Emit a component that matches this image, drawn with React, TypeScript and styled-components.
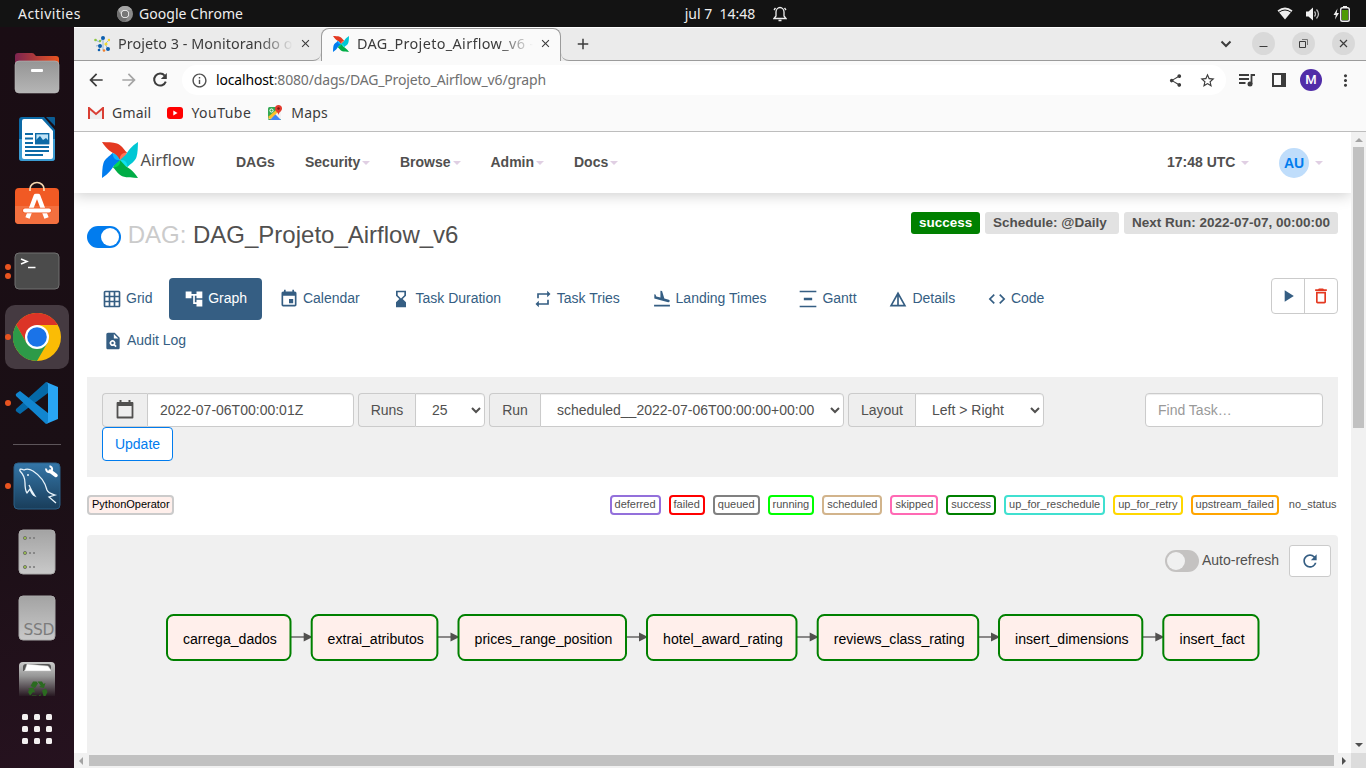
import React from 'react';
import styled, { createGlobalStyle, css } from 'styled-components';
import {
  MdGridOn, MdAccountTree, MdEvent, MdHourglassBottom, MdRepeat, MdFlightLand,
  MdVerticalDistribute, MdDetails, MdCode, MdPlagiarism,
  MdPlayArrow, MdDeleteOutline, MdRefresh, MdShare, MdStarBorder, MdArrowBack,
  MdArrowForward, MdInfoOutline, MdMoreVert, MdClose, MdAdd,
} from 'react-icons/md';

const Global = createGlobalStyle`
  * { box-sizing: border-box; }
  body { margin: 0; overflow: hidden; background: #fff; }
  svg { display: block; flex: none; }
`;

const ui = `'Noto Sans', 'Open Sans', sans-serif`;
const web = `'Liberation Sans', Arial, sans-serif`;

const Desktop = styled.div`
  width: 1366px;
  height: 768px;
  display: flex;
  flex-direction: column;
  overflow: hidden;
  font-family: ${ui};
`;

/* ---------- system bar ---------- */
const TopBar = styled.header`
  height: 27px;
  flex: none;
  display: grid;
  grid-template-columns: 1fr auto 1fr;
  align-items: center;
  background: #131313;
  color: #eee;
  font-size: 14px;
`;
const TopLeft = styled.div`
  display: flex;
  align-items: center;
  padding-left: 18px;
`;
const TopCenter = styled.div`
  display: flex;
  align-items: center;
  gap: 18px;
  margin-left: 106px;
`;
const TopRight = styled.div`
  display: flex;
  align-items: center;
  justify-content: flex-end;
  gap: 12px;
  padding-right: 16px;
`;
const Label = styled.span<{ $w?: number; $ls?: number }>`
  flex: none;
  white-space: pre;
  width: ${p => (p.$w ? `${p.$w}px` : 'auto')};
  letter-spacing: ${p => p.$ls ?? 0}px;
`;
const AppMenu = styled.div`
  display: flex;
  align-items: center;
  gap: 6px;
  margin-left: 36px;
`;

/* ---------- dock ---------- */
const Body = styled.div`
  flex: 1;
  display: flex;
  min-height: 0;
`;
const Dock = styled.nav`
  width: 74px;
  flex: none;
  display: flex;
  flex-direction: column;
  align-items: center;
  padding-top: 13px;
  background: linear-gradient(165deg, #1a0d14 0%, #1a0f15 60%, #26121f 100%);
`;
const DockCell = styled.div<{ $clip?: boolean }>`
  width: 74px;
  height: ${p => (p.$clip ? 45 : 66)}px;
  flex: none;
  display: grid;
  grid-template-columns: 5px 6px 1fr 11px;
  align-items: ${p => (p.$clip ? 'start' : 'center')};
  overflow: hidden;
  padding-top: ${p => (p.$clip ? 10 : 0)}px;
`;
const Dots = styled.div`
  grid-column: 2;
  display: flex;
  flex-direction: column;
  gap: 3px;
`;
const Dot = styled.i`
  width: 6px;
  height: 6px;
  border-radius: 50%;
  background: #e95420;
`;
const DockTile = styled.div<{ $active?: boolean }>`
  grid-column: 3;
  display: flex;
  justify-content: center;
  align-items: center;
  width: 64px;
  height: 64px;
  margin-left: -6px;
  border-radius: 10px;
  background: ${p => (p.$active ? '#453a41' : 'transparent')};
`;
const ActiveCell = styled(DockCell)`
  ${Dots} { z-index: 1; }
`;
const RaisedTile = styled(DockTile)`
  padding-bottom: 5px;
`;
const ClipTile = styled(DockTile)`
  height: 35px;
  align-items: flex-start;
`;
const DockRule = styled.hr`
  width: 48px;
  height: 1px;
  border: 0;
  margin: 8px 0;
  background: #5d555a;
  flex: none;
`;
const AppsGrid = styled.div`
  display: grid;
  grid-template-columns: repeat(3, 6px);
  grid-auto-rows: 6px;
  gap: 6px;
  margin-top: 18px;
`;
const AppsDot = styled.i`
  border-radius: 1.5px;
  background: #f3f0f0;
`;

/* ---------- browser chrome ---------- */
const Browser = styled.main`
  flex: 1;
  min-width: 0;
  display: flex;
  flex-direction: column;
  background: #fafafa;
  color: #3c3c3c;
`;
const TabStrip = styled.div`
  height: 34px;
  flex: none;
  display: flex;
  background: #ebebeb;
  border-top: 1px solid #fff;
`;
const Tab = styled.div<{ $active?: boolean }>`
  width: ${p => (p.$active ? 240 : 247)}px;
  display: flex;
  align-items: center;
  font-size: 14.4px;
  padding-bottom: 1px;
  ${p => p.$active
    ? css`
        background: #fafafa;
        border: 1px solid #9b9b9b;
        border-bottom: 0;
        border-radius: 8px 8px 0 0;
        padding-left: 11px;
        padding-bottom: 3px;
      `
    : css`
        border-bottom: 1px solid #9b9b9b;
        border-bottom-right-radius: 8px;
        padding-left: 20px;
      `}
`;
const TabTitle = styled.div<{ $w: number; $ls: number }>`
  width: ${p => p.$w}px;
  margin-left: 8px;
  white-space: pre;
  letter-spacing: ${p => p.$ls}px;
  mask-image: linear-gradient(90deg, #000 calc(100% - 34px), transparent);
`;
const TabClose = styled.span`
  display: flex;
  margin-left: 6px;
`;
const StripRest = styled.div`
  flex: 1;
  display: flex;
  align-items: center;
  justify-content: space-between;
  border-bottom: 1px solid #9b9b9b;
  border-bottom-left-radius: 8px;
  padding: 0 11px 1px 13px;
`;
const WindowButtons = styled.div`
  display: flex;
  align-items: center;
  gap: 17px;
`;
const RoundButton = styled.span`
  width: 23px;
  height: 23px;
  border-radius: 50%;
  background: #d9d9d9;
  display: flex;
  align-items: center;
  justify-content: center;
`;
const Toolbar = styled.div`
  height: 38px;
  flex: none;
  display: flex;
  align-items: center;
  padding: 0 12px;
  gap: 12px;
`;
const Omnibox = styled.div`
  width: 1044px;
  flex: none;
  height: 30px;
  margin-left: 2px;
  border-radius: 15px;
  background: #fff;
  display: flex;
  align-items: center;
  padding: 0 10px 0 9px;
  gap: 8px;
  font-size: 14px;
`;
const Url = styled.span`
  flex: 1;
  margin-top: -2px;
  color: #707070;
  letter-spacing: -0.16px;
`;
const UrlHost = styled.span`
  color: #000;
`;
const OmniActions = styled.span`
  display: flex;
  align-items: center;
  gap: 16px;
`;
const ToolActions = styled.div`
  display: flex;
  align-items: center;
  gap: 13.5px;
`;
const NavButtons = styled.div`
  display: flex;
  align-items: center;
  gap: 13px;
`;
const Profile = styled.span`
  width: 22px;
  height: 22px;
  border-radius: 50%;
  background: #512da8;
  color: #fff;
  font: 500 13px/22px Roboto, sans-serif;
  text-align: center;
`;
const Bookmarks = styled.div`
  height: 33px;
  flex: none;
  display: flex;
  align-items: flex-start;
  padding: 4px 0 0 14px;
  gap: 16px;
  font-size: 14px;
  line-height: 20px;
  border-bottom: 1px solid #bdbdbd;
`;
const Bookmark = styled.span`
  display: flex;
  align-items: center;
  gap: 8px;
`;

/* ---------- page viewport ---------- */
const Viewport = styled.div`
  flex: 1;
  min-height: 0;
  display: grid;
  grid-template-columns: 1fr 15px;
  grid-template-rows: 1fr 15px;
`;
const Page = styled.div`
  overflow: hidden;
  background: #fff;
  font-family: ${web};
  font-size: 14px;
  line-height: 20px;
  color: #51504f;
`;
const VScroll = styled.div`
  background: #f1f1f1;
  display: flex;
  flex-direction: column;
  align-items: center;
  padding-top: 6px;
`;
const VThumb = styled.div`
  width: 11px;
  height: 281px;
  margin: 5px 0 auto;
  background: #c1c1c1;
`;
const HScroll = styled.div`
  background: #f1f1f1;
  display: flex;
  align-items: center;
  padding: 0 5px;
`;
const HThumb = styled.div`
  flex: 1;
  height: 11px;
  margin: 0 8px 0 6px;
  background: #c1c1c1;
`;
const Corner = styled.div`
  background: #dcdcdc;
`;
const Arrow = styled.i<{ $dir: 'up' | 'down' | 'left' | 'right' }>`
  width: 0;
  height: 0;
  border: 4px solid transparent;
  ${p => p.$dir === 'up' && 'border-top: 0; border-bottom-color: #a3a3a3;'}
  ${p => p.$dir === 'down' && 'border-bottom: 0; border-top-color: #505050; margin-bottom: 6px;'}
  ${p => p.$dir === 'left' && 'border-left: 0; border-right-color: #a3a3a3;'}
  ${p => p.$dir === 'right' && 'border-right: 0; border-left-color: #505050;'}
`;

/* ---------- Airflow ---------- */
const NavBar = styled.div`
  height: 61px;
  display: flex;
  align-items: center;
  padding: 0 28px 0 28px;
  box-shadow: 0 2px 14px rgba(0, 0, 0, 0.2);
  font-weight: bold;
`;
const Brand = styled.div`
  width: 134px;
  display: flex;
  align-items: center;
  gap: 2.5px;
  font: 16.5px/20px 'Noto Sans', sans-serif;
  padding-bottom: 5px;
`;
const NavItem = styled.span<{ $w: number; $gap?: number }>`
  width: ${p => p.$w}px;
  display: flex;
  align-items: center;
  gap: ${p => p.$gap ?? 2}px;
  margin-top: -1px;
`;
const Caret = styled.i`
  border: 4px solid transparent;
  border-bottom: 0;
  border-top-color: #e0cfe3;
  margin-top: 2px;
`;
const Avatar = styled.span`
  width: 30px;
  height: 30px;
  border-radius: 50%;
  background: #bfddfb;
  color: #017cee;
  text-align: center;
  line-height: 31px;
  margin-top: 1px;
`;
const NavRight = styled.div`
  margin-left: auto;
  display: flex;
  align-items: center;
`;
const Content = styled.div`
  padding: 19px 13px 0;
`;
const TitleRow = styled.div`
  display: flex;
  justify-content: space-between;
  align-items: flex-start;
  height: 66px;
`;
const Title = styled.h3`
  display: flex;
  align-items: center;
  margin: 10px 0 0;
  font-size: 24px;
  font-weight: normal;
  line-height: 26px;
`;
const TitleMuted = styled.span`
  color: #cbcbcb;
  margin: 0 6.67px 0 6.67px;
`;
const Switch = styled.span<{ $on?: boolean }>`
  width: 34px;
  height: 22px;
  border-radius: 11px;
  padding: 2px;
  display: flex;
  justify-content: ${p => (p.$on ? 'flex-end' : 'flex-start')};
  background: ${p => (p.$on ? '#017cee' : '#c4c2c1')};
  margin-top: ${p => (p.$on ? 4 : 0)}px;
`;
const Knob = styled.i<{ $on?: boolean }>`
  width: 18px;
  height: 18px;
  border-radius: 50%;
  background: ${p => (p.$on ? '#fff' : '#f0f0f0')};
`;
const Badges = styled.div`
  display: flex;
  gap: 5px;
`;
const Badge = styled.span<{ $ok?: boolean; $w: number }>`
  width: ${p => p.$w}px;
  height: 22px;
  padding-left: 8px;
  border-radius: 3px;
  font-size: 13.5px;
  line-height: 22px;
  font-weight: bold;
  white-space: nowrap;
  background: ${p => (p.$ok ? '#008000' : '#e2e2e2')};
  color: ${p => (p.$ok ? '#fff' : '#51504f')};
`;
const TabsRow = styled.div`
  display: flex;
  justify-content: space-between;
  align-items: flex-start;
  margin-bottom: 15px;
`;
const Pills = styled.div`
  display: flex;
  flex-wrap: wrap;
  column-gap: 1.75px;
  width: 1030px;
`;
const Pill = styled.a<{ $active?: boolean; $indent?: number }>`
  height: 42px;
  display: flex;
  align-items: center;
  gap: 4px;
  padding: 0 15px;
  margin-left: ${p => p.$indent ?? 0}px;
  border-radius: 4px;
  color: ${p => (p.$active ? '#fff' : '#355e83')};
  background: ${p => (p.$active ? '#355e83' : 'transparent')};
`;
const PillText = styled.span`
  margin-top: -2px;
`;
const ButtonPair = styled.div`
  width: 67px;
  height: 36px;
  display: flex;
  border: 1px solid #cbcbcb;
  border-radius: 4px;
`;
const IconButton = styled.span<{ $danger?: boolean }>`
  flex: 1;
  display: flex;
  align-items: center;
  justify-content: center;
  color: ${p => (p.$danger ? '#e43921' : '#355e83')};
  & + & { border-left: 1px solid #cbcbcb; }
`;
const Filters = styled.div`
  height: 100px;
  padding: 16px 15px;
  background: #f0f0f0;
`;
const FilterRow = styled.div`
  display: flex;
  gap: 4px;
`;
const Group = styled.div<{ $w: number }>`
  width: ${p => p.$w}px;
  height: 34px;
  display: flex;
`;
const Addon = styled.span<{ $w: number }>`
  width: ${p => p.$w}px;
  flex: none;
  display: flex;
  align-items: center;
  justify-content: center;
  border: 1px solid #cbcbcb;
  border-right: 0;
  border-radius: 4px 0 0 4px;
  background: #eee;
`;
const control = css`
  height: 34px;
  min-width: 0;
  padding: 6px 12px;
  border: 1px solid #cbcbcb;
  background: #fff;
  color: #51504f;
  font: 14px/20px ${web};
  box-shadow: inset 0 1px 1px rgba(0, 0, 0, 0.075);
`;
const TextInput = styled.input<{ $alone?: boolean }>`
  ${control}
  flex: 1;
  border-radius: ${p => (p.$alone ? '4px' : '0 4px 4px 0')};
  &::placeholder { color: #999; }
`;
const Select = styled.select`
  ${control}
  flex: 1;
  border-radius: 0 4px 4px 0;
`;
const SearchGroup = styled(Group)`
  margin-left: auto;
`;
const UpdateButton = styled.button`
  display: block;
  width: 71px;
  height: 34px;
  padding: 0;
  border: 1px solid #017cee;
  border-radius: 4px;
  background: #fff;
  color: #017cee;
  font: 14px/20px ${web};
`;
const Legend = styled.div`
  display: flex;
  justify-content: space-between;
  margin: 18px 0 20px;
`;
const States = styled.div`
  display: flex;
  gap: 8px;
`;
const State = styled.span<{ $c?: string; $op?: boolean }>`
  height: 20px;
  padding: ${p => (p.$c ? (p.$op ? '0 2px 0 3px' : '0 3px') : '2px 1.5px 0 2px')};
  border: ${p => (p.$c ? `2px solid ${p.$c}` : '0')};
  border-radius: 4px;
  font-size: 11px;
  line-height: 15px;
  color: ${p => (p.$op ? '#000' : '#51504f')};
  background: ${p => (p.$op ? '#ffefeb' : '#fff')};
`;
const GraphBox = styled.section`
  height: 260px;
  border-radius: 4px;
  background: #f0f0f0;
`;
const GraphTools = styled.div`
  display: flex;
  justify-content: flex-end;
  align-items: center;
  padding: 10px 7px 0;
`;
const RefreshLabel = styled.span`
  margin: -2px 10px 0 3px;
`;
const RefreshButton = styled.span`
  width: 42px;
  height: 32px;
  display: flex;
  align-items: center;
  justify-content: center;
  border: 1px solid #cbcbcb;
  border-radius: 3px;
  background: #fff;
  color: #355e83;
`;

const pills = [
  { text: 'Grid', Icon: MdGridOn },
  { text: 'Graph', Icon: MdAccountTree, active: true },
  { text: 'Calendar', Icon: MdEvent },
  { text: 'Task Duration', Icon: MdHourglassBottom },
  { text: 'Task Tries', Icon: MdRepeat },
  { text: 'Landing Times', Icon: MdFlightLand },
  { text: 'Gantt', Icon: MdVerticalDistribute },
  { text: 'Details', Icon: MdDetails },
  { text: 'Code', Icon: MdCode },
  { text: 'Audit Log', Icon: MdPlagiarism, indent: 1 },
];

const states: [string, string?][] = [
  ['deferred', 'mediumpurple'], ['failed', 'red'], ['queued', 'gray'], ['running', 'lime'],
  ['scheduled', 'tan'], ['skipped', 'hotpink'], ['success', 'green'],
  ['up_for_reschedule', 'turquoise'], ['up_for_retry', 'gold'], ['upstream_failed', 'orange'],
  ['no_status'],
];

/* left edge and width of every task, in graph coordinates */
const tasks: [string, number, number][] = [
  ['carrega_dados', 80, 123.5], ['extrai_atributos', 224.7, 125.7], ['prices_range_position', 371.5, 167.5],
  ['hotel_award_rating', 560, 149.5], ['reviews_class_rating', 730.7, 160.5],
  ['insert_dimensions', 912, 143.3], ['insert_fact', 1076.3, 95.2],
];

const Pinwheel = ({ size }: { size: number }) => (
  <svg width={size} height={size} viewBox="0 0 36 36">
    {[
      ['#e43921', '#ff7557', 0],
      ['#00c7d4', '#11e1ee', 90],
      ['#00ad46', '#04d659', 180],
      ['#017cee', '#0cb6ff', 270],
    ].map(([dark, light, turn]) => (
      <g key={turn} transform={`rotate(${turn} 18 18)`}>
        <path d="M0 0C5 .2 11 .2 15 1.500C20 3.200 21 7 25 10.500Q22 13.500 18 18L12.500 12C8.500 9.500 4.500 7 0 0Z" fill={dark} />
        <path d="M18 18C17.500 14 19 11 25 10.500Q24 15 18 18Z" fill={light} />
      </g>
    ))}
  </svg>
);

const FilesIcon = () => (
  <svg width="46" height="42" viewBox="0 0 46 42">
    <defs>
      <linearGradient id="fold"><stop offset="0" stopColor="#7d2450" /><stop offset="1" stopColor="#e95420" /></linearGradient>
      <linearGradient id="grey" x2="0" y2="1"><stop offset="0" stopColor="#959595" /><stop offset="1" stopColor="#b5b5b5" /></linearGradient>
    </defs>
    <path d="M1 14V4Q1 1 4 1H18Q20 1 21 3L22 4H42Q45 4 45 7V14Z" fill="url(#fold)" />
    <rect x="1" y="9" width="44" height="32" rx="4" fill="url(#grey)" stroke="#b9b9b9" strokeWidth=".6" />
    <rect x="17" y="17" width="12" height="3" rx="1" fill="#fff" />
  </svg>
);

const WriterIcon = () => (
  <svg width="38" height="46" viewBox="0 0 38 46">
    <path d="M4 1H26L37 14V42Q37 45 34 45H4Q1 45 1 42V4Q1 1 4 1Z" fill="#0c6aa6" />
    <path d="M1 23H37V42Q37 45 34 45H4Q1 45 1 42Z" fill="#3b9cd2" />
    <path d="M28 1H36Q37 1 37 2V10Z" fill="#0b5d94" />
    <path d="M6 3H24L35 15V41Q35 43 33 43H6Q4 43 4 41V5Q4 3 6 3Z" fill="#fff" />
    <path d="M7 18H15M7 22.500H15M7 27H15M7 31H31M7 35H31M7 39H25" stroke="#0c6aa6" strokeWidth="2" />
    <rect x="17.700" y="17.700" width="13" height="10" fill="#bfe3f7" stroke="#0c6aa6" strokeWidth="1.400" />
    <path d="M18 27V24L22 20L25 24L28 22L31 25V27Z" fill="#0c6aa6" />
  </svg>
);

const SoftwareIcon = () => (
  <svg width="46" height="44" viewBox="0 0 46 44">
    <rect x="1" y="7" width="44" height="36" rx="4" fill="#f15a24" />
    <path d="M1 25H45V39Q45 43 41 43H5Q1 43 1 39Z" fill="#f3703f" />
    <path d="M16 10V8A7 6.500 0 0 1 30 8V10" fill="none" stroke="#f7d9b0" strokeWidth="1.700" />
    <path d="M13.500 37L21.800 15H24.200L32.500 37" fill="none" stroke="#fff" strokeWidth="4.500" strokeLinejoin="round" />
    <path d="M11 29.500H35" stroke="#f15a24" strokeWidth="5.500" strokeLinecap="round" />
    <path d="M11 29.500H35" stroke="#fff" strokeWidth="4" strokeLinecap="round" />
  </svg>
);

const TerminalIcon = () => (
  <svg width="46" height="38" viewBox="0 0 46 38">
    <rect x="1" y="1" width="44" height="36" rx="4" fill="#4b4b4b" stroke="#717171" />
    <path d="M7 7L13 9.500L7 12" fill="none" stroke="#fff" strokeWidth="1.500" />
    <path d="M14 15.500H21.500" stroke="#fff" strokeWidth="1.500" />
  </svg>
);

const ChromeIcon = ({ size = 48, mono }: { size?: number; mono?: boolean }) => (
  <svg width={size} height={size} viewBox="0 0 48 48">
    <circle cx="24" cy="24" r="24" fill={mono ? '#8a8a8a' : '#fbbc05'} />
    <path d="M24 24L24 12H44.800A24 24 0 0 0 3.200 12L13.600 30Z" fill={mono ? '#a5a5a5' : '#dc3427'} />
    <path d="M3.200 12A24 24 0 0 0 24 48L34.400 30H13.600Z" fill={mono ? '#707070' : '#2d9a48'} />
    <circle cx="24" cy="24" r="12" fill="#fff" />
    <circle cx="24" cy="24" r="9.800" fill={mono ? '#777' : '#1a73e8'} />
  </svg>
);

const CodeIcon = () => (
  <svg width="44" height="44" viewBox="0 0 44 44">
    <path d="M1 28Q0 30 2 31L5 33L33 12V2L31 1Z" fill="#0569a8" />
    <path d="M1 15Q0 13 2 12L5 10L33 32V42L31 43Z" fill="#1185cf" />
    <path d="M31 1L43 6V38L31 43Q33 42 33 40V4Q33 2 31 1Z" fill="#29a5f3" />
  </svg>
);

const MysqlIcon = () => (
  <svg width="48" height="48" viewBox="0 0 48 48">
    <defs><linearGradient id="sea" x2="0" y2="1"><stop offset="0" stopColor="#3476a8" /><stop offset="1" stopColor="#193d5a" /></linearGradient></defs>
    <rect x="1" y="1" width="46" height="46" rx="4" fill="url(#sea)" stroke="#2b6088" />
    <path d="M7 9Q6 6 11 8Q15 6 20 9Q31 16 34 28Q35 31 42 33L36 35L43 41M7 9Q12 14 12 21Q12 28 14 31L17 27Q19 33 22 34Q18 28 16 23" fill="none" stroke="#e9f4fb" strokeWidth="1.300" />
    <circle cx="15" cy="13" r="1" fill="#e9f4fb" />
    <path d="M37 9L43 13.500" stroke="#fff" strokeWidth="3.500" strokeLinecap="round" />
    <path d="M34 5A3 3 0 1 0 38 5" fill="none" stroke="#fff" strokeWidth="2" transform="rotate(-35 36 7)" />
  </svg>
);

const DriveIcon = ({ ssd }: { ssd?: boolean }) => (
  <svg width="38" height="46" viewBox="0 0 38 46">
    <defs><linearGradient id="disk" x2="0" y2="1"><stop offset="0" stopColor="#a3a3a3" /><stop offset="1" stopColor="#c9c9c9" /></linearGradient></defs>
    <rect x="1" y="1" width="36" height="44" rx="4" fill="url(#disk)" stroke="#aaa" />
    {ssd ? (
      <text x="5.500" y="39.800" fontFamily="DejaVu Sans" fontSize="15.500" fill="#7c7c7c" textLength="31">SSD</text>
    ) : (
      [9, 24, 38].map(y => (
        <g key={y} fill="#777">
          <circle cx="7" cy={y} r="1.600" fill="#9bbf4f" stroke="#666" strokeWidth=".8" />
          <circle cx="12" cy={y} r="1" />
          <circle cx="16" cy={y} r="1" />
        </g>
      ))
    )}
  </svg>
);

const TrashIcon = () => (
  <svg width="38" height="36" viewBox="0 0 38 36">
    <defs><linearGradient id="bin" x2="0" y2="1"><stop offset="0" stopColor="#ccc" /><stop offset=".4" stopColor="#979797" /><stop offset="1" stopColor="#22131c" /></linearGradient></defs>
    <path d="M1 36V5Q1 1 5 1H33Q37 1 37 5V36Z" fill="url(#bin)" />
    <path d="M5 10V6Q5 3 8 3H30Q33 3 33 6V10Z" fill="#555" />
    <path d="M7 9L9 3L30 5L33 9V10H6Z" fill="#fff" stroke="#bbb" strokeWidth=".5" />
    <g fill="#2b6a20">
      <path d="M12.500 25L15 20.500H18.500L20 22.500L17 27Z" />
      <path d="M19.500 20.500H24L25.500 23L27.500 22L26 27L21 26L22.800 24.800Z" />
      <path d="M10 27.500L15.500 26.500L17 31.500L15 31L13.500 33L12 34.500L10 31L11.500 28.500Z" />
      <path d="M24 29.500L28 27.500L29.500 31L27.500 35H25.500Z" />
      <path d="M13 36L14 34.500H18.500V36ZM20 36L22.500 33V36Z" />
    </g>
  </svg>
);

const BellIcon = () => (
  <svg width="14" height="16" viewBox="0 0 14 16" fill="none" stroke="#eee" strokeWidth="1.300">
    <path d="M1 12.500L3 10V6A4 4.500 0 0 1 11 6V10L13 12.500ZM5.500 14.500H8.500M1 4L2.500 2M13 4L11.500 2" />
  </svg>
);

const ProjectIcon = () => (
  <svg width="16" height="16" viewBox="0 0 16 16">
    <path d="M1 4L6 6L9 2V14M15 4L11 8L14 13M2 10L7 9L5 14" stroke="#8fb6d8" fill="none" />
    <g fill="#0d5fae"><circle cx="9" cy="2" r="2" /><circle cx="6" cy="10" r="2" /><circle cx="14" cy="13" r="2" /><circle cx="5" cy="14" r="1.300" /></g>
    <g fill="#f4d92b"><circle cx="15" cy="4" r="1.300" /><circle cx="12" cy="8" r="1.500" /></g>
    <g fill="#8cc63f"><circle cx="1.500" cy="4" r="1.300" /><circle cx="6" cy="5" r="1.200" /></g>
    <circle cx="10" cy="14.500" r="1.300" fill="#f08030" />
  </svg>
);

const ReloadIcon = () => (
  <svg width="16" height="16" viewBox="0 0 16 16">
    <path d="M12.700 3.600A6 6 0 1 0 13.800 9.700" fill="none" stroke="#3c3c3c" strokeWidth="2" />
    <path d="M14.800 1V7H8.800Z" fill="#3c3c3c" />
  </svg>
);

const DateIcon = () => (
  <svg width="18" height="20" viewBox="0 0 18 20">
    <path d="M1.500 3H16.500V17.500H1.500Z" fill="none" stroke="#51504f" strokeWidth="1.800" strokeLinejoin="round" />
    <path d="M1 2H17V6H1ZM3.500 0H5.500V3H3.500ZM12.500 0H14.500V3H12.500Z" fill="#51504f" />
  </svg>
);

const Graph = () => (
  <svg width="1251" height="90" viewBox="0 0 1251 90">
    {tasks.map(([name, x, w], i) => {
      const next = tasks[i + 1];
      return (
        <g key={name}>
          {next && (
            <>
              <path d={`M${x + w} 60H${next[1] - 7}`} stroke="#51504f" strokeWidth="1.300" />
              <path d={`M${next[1] - 8} 55.500L${next[1] + 1} 60L${next[1] - 8} 64.500Z`} fill="#51504f" />
            </>
          )}
          <rect x={x} y="38" width={w} height="45" rx="6.500" fill="#ffefeb" stroke="#008000" strokeWidth="2" />
          <text x={x + w / 2 + 1.2} y="67" textAnchor="middle" fontSize="14.080" fontFamily="Liberation Sans" fill="#000">{name}</text>
        </g>
      );
    })}
  </svg>
);

export default function App() {
  return (
    <Desktop>
      <Global />
      <TopBar>
        <TopLeft>
          <Label $w={63} $ls={0.45}>Activities</Label>
          <AppMenu>
            <ChromeIcon size={16} mono />
            <Label $ls={0.05}>Google Chrome</Label>
          </AppMenu>
        </TopLeft>
        <TopCenter>
          <Label $ls={0}>jul 7  14:48</Label>
          <BellIcon />
        </TopCenter>
        <TopRight>
          <svg width="16" height="13" viewBox="0 0 16 13">
            <path d="M.5 3.500Q8-2.500 15.500 3.500L8 12.500Z" fill="#eee" />
            <path d="M2 5.200Q8 .8 14 5.200" stroke="#131313" fill="none" strokeWidth="1" />
          </svg>
          <svg width="16" height="14" viewBox="0 0 16 14" fill="#f2f2f2">
            <path d="M1 4.500H3.500L8 .5V13.500L3.500 9.500H1Z" />
            <path d="M9.500 4.500Q11.500 7 9.500 9.500M11.500 2.500Q15.500 7 11.500 11.500" fill="none" stroke="#bbb" strokeWidth="1.300" />
          </svg>
          <svg width="17" height="16" viewBox="0 0 17 16">
            <path d="M4.500 2.500L.5 9H2.800L2 13.500L6 7H3.700Z" fill="#eee" />
            <rect x="7.700" y="1.800" width="8.600" height="13.400" rx="1.800" fill="#131313" stroke="#eee" strokeWidth="1.400" />
            <rect x="10" y="0" width="4" height="2" fill="#eee" />
            <rect x="9" y="4" width="6" height="10" fill="#4e9a06" />
          </svg>
        </TopRight>
      </TopBar>
      <Body>
        <Dock>
          <DockCell><DockTile><FilesIcon /></DockTile></DockCell>
          <DockCell><DockTile><WriterIcon /></DockTile></DockCell>
          <DockCell><RaisedTile><SoftwareIcon /></RaisedTile></DockCell>
          <DockCell><Dots><Dot /><Dot /></Dots><DockTile><TerminalIcon /></DockTile></DockCell>
          <ActiveCell><Dots><Dot /></Dots><DockTile $active><ChromeIcon /></DockTile></ActiveCell>
          <DockCell><Dots><Dot /></Dots><DockTile><CodeIcon /></DockTile></DockCell>
          <DockRule />
          <DockCell><Dots><Dot /></Dots><DockTile><MysqlIcon /></DockTile></DockCell>
          <DockCell><DockTile><DriveIcon /></DockTile></DockCell>
          <DockCell><DockTile><DriveIcon ssd /></DockTile></DockCell>
          <DockCell $clip><ClipTile><TrashIcon /></ClipTile></DockCell>
          <AppsGrid>{Array.from({ length: 9 }, (_, i) => <AppsDot key={i} />)}</AppsGrid>
        </Dock>
        <Browser>
          <TabStrip>
            <Tab>
              <ProjectIcon />
              <TabTitle $w={175} $ls={0.03}>Projeto 3 - Monitorando o</TabTitle>
              <TabClose><MdClose size={13} stroke="currentColor" /></TabClose>
            </Tab>
            <Tab $active>
              <Pinwheel size={16} />
              <TabTitle $w={176} $ls={0.36}>DAG_Projeto_Airflow_v6 -</TabTitle>
              <TabClose><MdClose size={13} stroke="currentColor" /></TabClose>
            </Tab>
            <StripRest>
              <MdAdd size={18} stroke="currentColor" />
              <WindowButtons>
                <svg width="16" height="8" viewBox="-1 0 16 8"><path d="M1.500 1.500L6 6L10.500 1.500" fill="none" stroke="#3c3c3c" strokeWidth="2" /></svg>
                <RoundButton><svg width="9" height="9"><path d="M.5 7.500H8.500" stroke="#3c3c3c" /></svg></RoundButton>
                <RoundButton><svg width="9" height="9"><path d="M.5 2.500H6.500V8.500H.5Z" fill="none" stroke="#3c3c3c" /><path d="M3 .5H8.500V6" fill="none" stroke="#777" /></svg></RoundButton>
                <RoundButton><svg width="9" height="9"><path d="M1 1L8 8M8 1L1 8" stroke="#3c3c3c" strokeWidth="1.200" /></svg></RoundButton>
              </WindowButtons>
            </StripRest>
          </TabStrip>
          <Toolbar>
            <NavButtons>
              <MdArrowBack size={20} color="#3c3c3c" />
              <MdArrowForward size={20} color="#a5a5a5" />
              <ReloadIcon />
            </NavButtons>
            <Omnibox>
              <MdInfoOutline size={17} color="#4f4f4f" />
              <Url><UrlHost>localhost</UrlHost>:8080/dags/DAG_Projeto_Airflow_v6/graph</Url>
              <OmniActions><MdShare size={15} /><MdStarBorder size={17} /></OmniActions>
            </Omnibox>
            <ToolActions>
              <svg width="17" height="14" viewBox="-1 0 17 14"><path d="M0 2H10M0 6H10M0 10H6.500M12.500 11V2H16" fill="none" stroke="#3c3c3c" strokeWidth="1.800" /><circle cx="11" cy="11" r="2.500" fill="#3c3c3c" /></svg>
              <svg width="18" height="14" viewBox="-3 0 18 14"><path d="M1 1H13V13H1Z" fill="none" stroke="#3c3c3c" strokeWidth="2" /><path d="M9 0H14V14H9Z" fill="#3c3c3c" /></svg>
              <Profile>M</Profile>
              <MdMoreVert size={19} />
            </ToolActions>
          </Toolbar>
          <Bookmarks>
            <Bookmark>
              <svg width="16" height="12" viewBox="0 0 16 12"><path d="M1 12V1L8 7L15 1V12" fill="#eee" stroke="#d93e33" strokeWidth="2" /></svg>
              <Label $ls={0.2}>Gmail</Label>
            </Bookmark>
            <Bookmark>
              <svg width="16" height="12" viewBox="0 0 16 12"><rect width="16" height="12" rx="3" fill="#f00" /><path d="M6.300 3.500L10.500 6L6.300 8.500Z" fill="#fff" /></svg>
              <Label $ls={0.48}>YouTube</Label>
            </Bookmark>
            <Bookmark>
              <svg width="16" height="16" viewBox="0 0 16 16"><rect x="1" y="2" width="13" height="13" rx="1.500" fill="#34a853" /><path d="M1 14L13 3L14 6V14Z" fill="#f2f2f2" /><path d="M3 15L8 9L14 15Z" fill="#4285f4" /><path d="M1 12L9 5L11 7L3 14.500Z" fill="#fbc02d" /><path d="M11.500 0A3.500 3.500 0 0 1 15 3.700C15 6 12 7 11.500 10C11 7 8 6 8 3.700A3.500 3.500 0 0 1 11.500 0Z" fill="#e33b2e" /><circle cx="11.500" cy="3.500" r="1.200" fill="#7b1a12" /><circle cx="4.500" cy="5.500" r="1.600" fill="none" stroke="#fff" /></svg>
              <Label $ls={0.2}>Maps</Label>
            </Bookmark>
          </Bookmarks>
          <Viewport>
            <Page>
              <NavBar>
                <Brand><Pinwheel size={36} />Airflow</Brand>
                <NavItem $w={69}>DAGs</NavItem>
                <NavItem $w={95}>Security<Caret /></NavItem>
                <NavItem $w={90.5}>Browse<Caret /></NavItem>
                <NavItem $w={83.5}>Admin<Caret /></NavItem>
                <NavItem $w={60}>Docs<Caret /></NavItem>
                <NavRight>
                  <NavItem $w={112} $gap={6}>17:48 UTC<Caret /></NavItem>
                  <NavItem $w={44} $gap={6}><Avatar>AU</Avatar><Caret /></NavItem>
                </NavRight>
              </NavBar>
              <Content>
                <TitleRow>
                  <Title>
                    <Switch $on><Knob $on /></Switch>
                    <TitleMuted>DAG:</TitleMuted>DAG_Projeto_Airflow_v6
                  </Title>
                  <Badges>
                    <Badge $ok $w={69}>success</Badge>
                    <Badge $w={134}>Schedule: @Daily</Badge>
                    <Badge $w={214}>Next Run: 2022-07-07, 00:00:00</Badge>
                  </Badges>
                </TitleRow>
                <TabsRow>
                  <Pills>
                    {pills.map(({ text, Icon, active, indent }) => (
                      <Pill key={text} $active={active} $indent={indent}><Icon size={20} /><PillText>{text}</PillText></Pill>
                    ))}
                  </Pills>
                  <ButtonPair>
                    <IconButton><MdPlayArrow size={20} /></IconButton>
                    <IconButton $danger><MdDeleteOutline size={20} /></IconButton>
                  </ButtonPair>
                </TabsRow>
                <Filters>
                  <FilterRow>
                    <Group $w={252}><Addon $w={45}><DateIcon /></Addon><TextInput defaultValue="2022-07-06T00:00:01Z" /></Group>
                    <Group $w={127}><Addon $w={57}>Runs</Addon><Select><option>25</option></Select></Group>
                    <Group $w={355}><Addon $w={51}>Run</Addon><Select><option>scheduled__2022-07-06T00:00:00+00:00</option></Select></Group>
                    <Group $w={196}><Addon $w={67}>Layout</Addon><Select><option>Left &gt; Right</option></Select></Group>
                    <SearchGroup $w={178}><TextInput $alone placeholder="Find Task…" /></SearchGroup>
                  </FilterRow>
                  <UpdateButton>Update</UpdateButton>
                </Filters>
                <Legend>
                  <State $op $c="#cbcbcb">PythonOperator</State>
                  <States>{states.map(([name, c]) => <State key={name} $c={c}>{name}</State>)}</States>
                </Legend>
                <GraphBox>
                  <GraphTools>
                    <Switch><Knob /></Switch>
                    <RefreshLabel>Auto-refresh</RefreshLabel>
                    <RefreshButton><MdRefresh size={20} /></RefreshButton>
                  </GraphTools>
                  <Graph />
                </GraphBox>
              </Content>
            </Page>
            <VScroll><Arrow $dir="up" /><VThumb /><Arrow $dir="down" /></VScroll>
            <HScroll><Arrow $dir="left" /><HThumb /><Arrow $dir="right" /></HScroll>
            <Corner />
          </Viewport>
        </Browser>
      </Body>
    </Desktop>
  );
}
